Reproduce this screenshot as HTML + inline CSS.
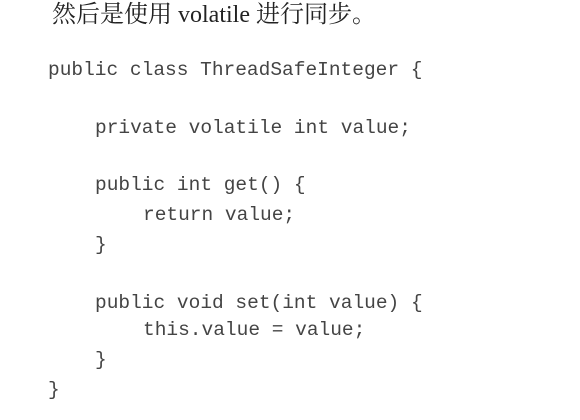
<!DOCTYPE html>
<html><head><meta charset="utf-8"><style>
body{margin:0;width:580px;height:420px;background:#fff;position:relative;overflow:hidden}
.h{position:absolute;left:52px;top:0px;font:24px/30px "Liberation Serif","Noto Serif CJK SC",serif;color:#222;white-space:pre}
.c{position:absolute;font:19.5px/20px "Liberation Mono",monospace;color:#444;white-space:pre}
</style></head><body>
<div class="h">然后是使用 volatile 进行同步。</div>
<div class="c" style="left:48px;top:60px">public class ThreadSafeInteger {</div>
<div class="c" style="left:95px;top:118px">private volatile int value;</div>
<div class="c" style="left:95px;top:175px">public int get() {</div>
<div class="c" style="left:143px;top:205px">return value;</div>
<div class="c" style="left:95px;top:235px">}</div>
<div class="c" style="left:95px;top:293px">public void set(int value) {</div>
<div class="c" style="left:143px;top:320px">this.value = value;</div>
<div class="c" style="left:95px;top:350px">}</div>
<div class="c" style="left:48px;top:380px">}</div>
</body></html>
